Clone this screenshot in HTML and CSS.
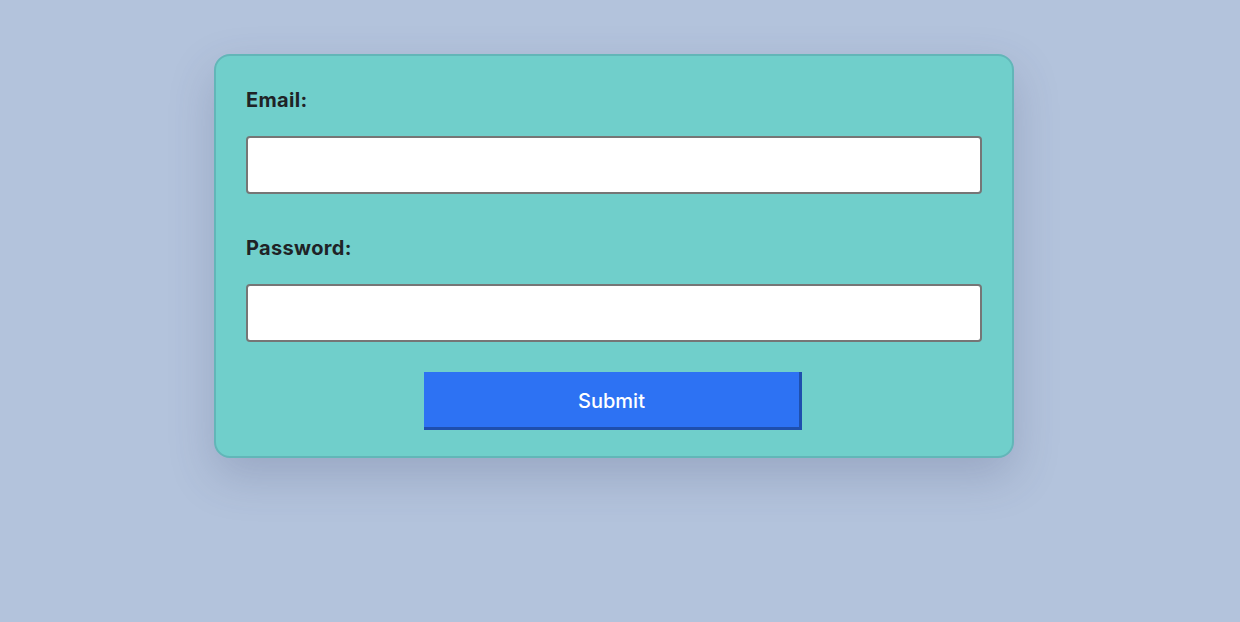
FILE: index.html
```html
<!DOCTYPE html>
<html lang="en">
<head>
<meta charset="utf-8">
<title>Login</title>
<link rel="stylesheet" href="styles.css">
</head>
<body>
<main class="page">
  <form class="card">
    <label class="label" for="email">Email:</label>
    <input class="input" id="email" type="email">
    <label class="label label-second" for="password">Password:</label>
    <input class="input" id="password" type="password">
    <div class="actions">
      <button class="submit" type="button">Submit</button>
    </div>
  </form>
</main>
</body>
</html>
```

FILE: styles.css
```css
html, body {
  margin: 0;
  padding: 0;
  background: #b3c3dc;
  font-family: Inter, "Noto Sans", "Liberation Sans", sans-serif;
}

.page {
  display: flex;
  justify-content: center;
  align-items: flex-start;
  padding: 54px 12px 0 0;
  min-height: 622px;
  box-sizing: border-box;
}

.card {
  width: 800px;
  box-sizing: border-box;
  background: #70cfcb;
  border: 2px solid #62b6b8;
  border-radius: 16px;
  padding: 32px 30px 26px;
  display: flex;
  flex-direction: column;
  box-shadow: 0 18px 46px rgba(60, 70, 110, 0.22);
}

.label {
  display: block;
  font-size: 20px;
  font-weight: 700;
  line-height: 24px;
  letter-spacing: 0.35px;
  color: #1f2326;
  margin-bottom: 24px;
}

.label-second {
  margin-top: 42px;
}

.input {
  display: block;
  width: 100%;
  height: 58px;
  box-sizing: border-box;
  border: 2px solid #767676;
  border-radius: 4px;
  background: #ffffff;
  margin: 0;
  padding: 0 10px;
  font-size: 18px;
}

.actions {
  display: flex;
  justify-content: center;
  margin-top: 30px;
}

.submit {
  width: 378px;
  height: 58px;
  box-sizing: border-box;
  background: #2d72f3;
  color: #ffffff;
  font-family: Inter, "Noto Sans", "Liberation Sans", sans-serif;
  font-size: 20px;
  font-weight: 500;
  border-style: solid;
  border-width: 0 3px 3px 0;
  border-color: #2d72f3 #1e4fae #1e4fae #2d72f3;
  padding: 2px 0 0;
  margin: 0 2px 0 0;
  cursor: pointer;
}
```
